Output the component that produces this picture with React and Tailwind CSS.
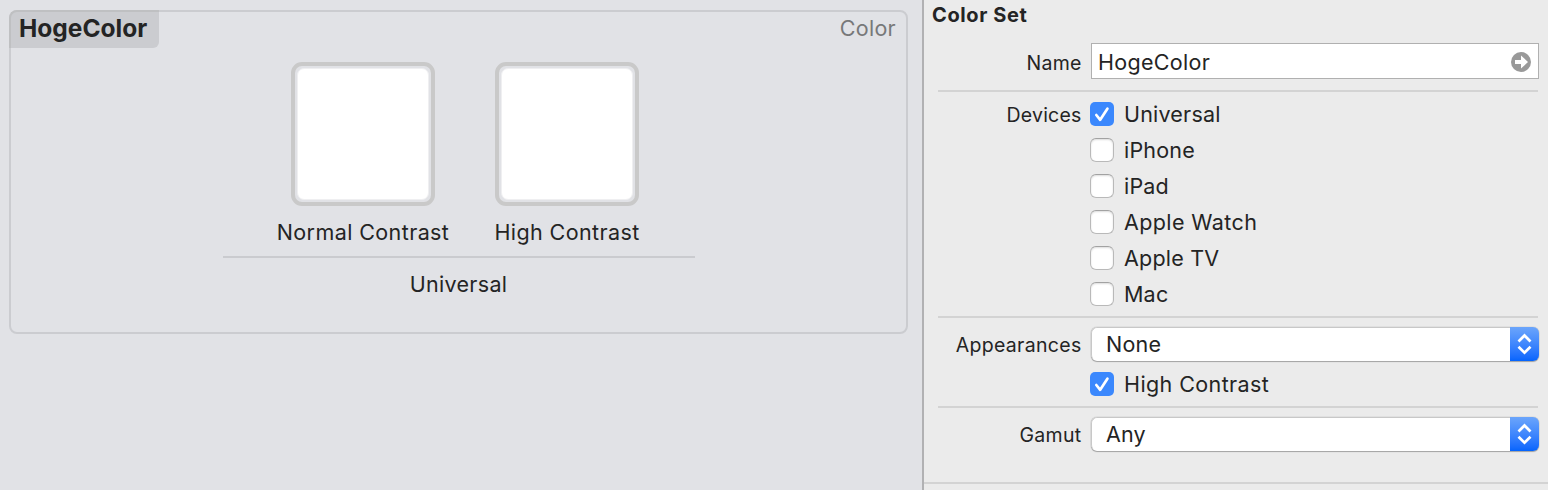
import React from 'react';

const TEXT = 'text-[21.5px] leading-[26px] whitespace-nowrap';

function Swatch({ label, spacing }) {
  return (
    <div className="flex w-[204px] flex-col items-center">
      <div className="size-[144px] rounded-[11px] border-4 border-[#c9c9c9] p-[2px]">
        <div className="size-full rounded-[7px] border border-[#efeff1] bg-white" />
      </div>
      <div className={`mt-[13px] ${TEXT} ${spacing}`}>{label}</div>
    </div>
  );
}

function Checkbox({ label, checked, spacing }) {
  return (
    <div className="flex h-6 items-center gap-[10px]">
      {checked ? (
        <svg className="size-6 rounded-[5px] bg-[#3b88fd]" viewBox="0 0 24 24" fill="none">
          <path d="M6.3 13 L10.2 17.8 L17.4 6.7" stroke="white" strokeWidth="2.7" strokeLinecap="round" strokeLinejoin="round" />
        </svg>
      ) : (
        <div className="size-6 rounded-[6px] border border-[#b9b9b9] border-t-[#a2a2a2] bg-white shadow-[inset_0_1px_2px_#00000024]" />
      )}
      <span className={`${TEXT} ${spacing}`}>{label}</span>
    </div>
  );
}

function Select({ value, spacing }) {
  return (
    <div className="flex h-[34px] flex-1 overflow-hidden rounded-[6px] shadow-[0_1px_1px_#00000048,0_0_1px_#00000070]">
      <div className={`flex flex-1 items-center border-l border-t border-[#c8c8c8] rounded-l-[6px] bg-white pb-[2px] pl-[14px] ${TEXT} ${spacing}`}>{value}</div>
      <svg className="h-[34px] w-[29px] bg-linear-to-b from-[#6ba5fb] to-[#0364fd]" viewBox="0 0 29 34" fill="none">
        <path d="M8.5 14.5 L14.5 8.5 L20.5 14.5 M8.5 19.7 L14.5 25.7 L20.5 19.7" stroke="white" strokeWidth="2.7" />
      </svg>
    </div>
  );
}

function Label({ children, spacing }) {
  return <div className={`w-[158px] shrink-0 pr-[0.5px] text-right text-[19.5px] leading-6 ${spacing}`}>{children}</div>;
}

function Divider() {
  return <div className="ml-[14px] mr-[10px] h-[2px] bg-[#d3d3d3]" />;
}

export default function App() {
  return (
    <div className="flex h-[490px] w-[1548px] overflow-hidden bg-[#e1e2e6] font-['Inter','Liberation_Sans',sans-serif] text-[#242424]">
      <main className="w-[922px] pl-[9px] pt-[10px]">
        <section className="grid h-[324px] w-[899px] grid-cols-1 grid-rows-1 rounded-[8px] border-2 border-[#cbccd0]">
          <div className="flex flex-col">
            <header className="flex h-[36px] items-start justify-between">
              <div className="-ml-[2px] -mt-[2px] h-[38px] w-[150px] rounded-tl-[8px] rounded-br-[6px] border-l-2 border-t-2 border-[#bfc0c2] bg-[#cbccd0] pl-[8px] text-[24.5px] font-bold leading-[32px]">
                HogeColor
              </div>
              <div className={`mr-[10px] mt-[3px] text-[#777879] ${TEXT} tracking-[0.3px]`}>Color</div>
            </header>
            <div className="ml-[250px] mt-[14px] flex">
              <Swatch label="Normal Contrast" spacing="tracking-[0.4px]" />
              <Swatch label="High Contrast" spacing="tracking-[0.4px]" />
            </div>
            <div className="ml-[212px] mt-[11px] h-[2px] w-[472px] bg-[#cacbcf]" />
            <div className={`ml-[212px] mt-[13px] w-[471px] text-center ${TEXT} tracking-[0.3px]`}>Universal</div>
          </div>
        </section>
      </main>
      <aside className="flex w-[626px] flex-col border-l-2 border-[#b1b1b3] bg-[#ebebeb]">
        <h2 className="mt-[2px] h-[26px] pl-[8px] text-[20px] font-bold leading-[26px] tracking-[0.6px]">Color Set</h2>
        <div className="mt-[15px] flex items-center gap-[8px] pr-[9px]">
          <Label spacing="pt-[4px] tracking-[0.2px]">Name</Label>
          <div className="ml-[1px] flex h-[36px] flex-1 items-center justify-between border border-[#b0b0b0] bg-white pl-[6px] pr-[7px] pt-[2px]">
            <span className={`${TEXT} tracking-[0.3px]`}>HogeColor</span>
            <svg className="size-5" viewBox="0 0 20 20">
              <circle cx="10" cy="10" r="10" fill="#999" />
              <path d="M4 8 H10 V3.4 L17 10 L10 16.6 V12 H4 Z" fill="white" />
            </svg>
          </div>
        </div>
        <div className="mt-[11px]"><Divider /></div>
        <div className="mt-[10px] flex items-start gap-[8px]">
          <Label spacing="pt-[1px] tracking-[0.2px]">Devices</Label>
          <div className="flex flex-col gap-3">
            <Checkbox label="Universal" checked spacing="tracking-[0.2px]" />
            <Checkbox label="iPhone" spacing="tracking-[0.2px]" />
            <Checkbox label="iPad" spacing="tracking-[0.2px]" />
            <Checkbox label="Apple Watch" spacing="tracking-[0.4px]" />
            <Checkbox label="Apple TV" spacing="tracking-[0.2px]" />
            <Checkbox label="Mac" spacing="tracking-[0.2px]" />
          </div>
        </div>
        <div className="mt-[10px]"><Divider /></div>
        <div className="mt-[9px] flex items-center gap-[9px] pr-[9px]">
          <Label spacing="pt-[2px] tracking-[0.3px]">Appearances</Label>
          <Select value="None" spacing="tracking-[0.2px]" />
        </div>
        <div className="ml-[166px] mt-[11px]">
          <Checkbox label="High Contrast" checked spacing="tracking-[0.4px]" />
        </div>
        <div className="mt-[10px]"><Divider /></div>
        <div className="mt-[9px] flex items-center gap-[9px] pr-[9px]">
          <Label spacing="pt-[2px] tracking-[0.3px]">Gamut</Label>
          <Select value="Any" spacing="tracking-[0.1px]" />
        </div>
        <div className="mt-[31px] h-[2px] bg-[#d3d3d3]" />
      </aside>
    </div>
  );
}
